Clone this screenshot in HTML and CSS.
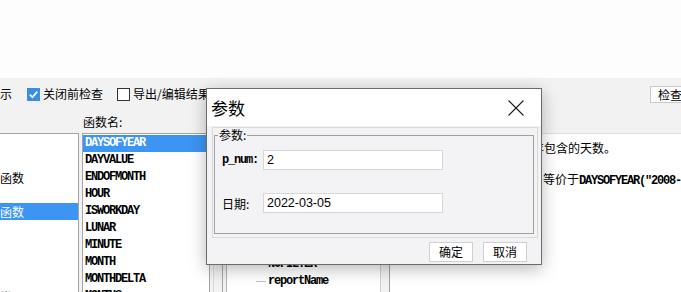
FILE: index.html
```html
<!DOCTYPE html>
<html lang="zh-CN">
<head>
    <meta charset="UTF-8">
    <title>参数</title>
    <link rel="stylesheet" href="styles.css">
</head>
<body>
    <div class="topspace"></div>

    <div class="app">
        <div class="toolbar">
            <label class="chk"><span class="box"></span>显示</label>
            <label class="chk"><svg class="box on" viewBox="0 0 13 13"><path d="M2.8 6.6 L5.4 9.2 L10.3 3.6"/></svg>关闭前检查</label>
            <label class="chk"><span class="box"></span>导出/编辑结果集</label>
            <label class="chk"><svg class="box on" viewBox="0 0 13 13"><path d="M2.8 6.6 L5.4 9.2 L10.3 3.6"/></svg>显示行号</label>
            <label class="chk"><span class="box"></span>自动换行</label>
            <button class="tool-btn">检查</button>
        </div>

        <div class="main">
            <div class="cat-col">
                <div class="cat-box">
                    <div class="row">常用</div>
                    <div class="row">全部</div>
                    <div class="row">数学函数</div>
                    <div class="row">文本</div>
                    <div class="row selected">日期函数</div>
                    <div class="row">逻辑</div>
                    <div class="row">数组</div>
                    <div class="row">报表</div>
                    <div class="row">其它</div>
                    <div class="row">其他类</div>
                </div>
            </div>

            <div class="fn-col">
                <div class="col-label">函数名:</div>
                <div class="fn-box">
                    <div class="row selected">DAYSOFYEAR</div>
                    <div class="row">DAYVALUE</div>
                    <div class="row">ENDOFMONTH</div>
                    <div class="row">HOUR</div>
                    <div class="row">ISWORKDAY</div>
                    <div class="row">LUNAR</div>
                    <div class="row">MINUTE</div>
                    <div class="row">MONTH</div>
                    <div class="row">MONTHDELTA</div>
                    <div class="row">MONTHS</div>
                </div>
            </div>

            <div class="mid-col">
                <div class="tree-box">
                    <div class="tree">
                        <div class="row">参数</div>
                        <div class="row">p_num</div>
                        <div class="row">单元格</div>
                        <div class="row">A1</div>
                        <div class="row">B1</div>
                        <div class="row">数据集</div>
                        <div class="row">ds1</div>
                        <div class="row">NOFILTER</div>
                        <div class="row">reportName</div>
                        <div class="row">formletNo</div>
                    </div>
                </div>
            </div>

            <div class="desc-col">
                <p class="desc-line first">返回日期所在的那一年包含的天数。</p>
                <p class="desc-line">如：<span class="mono">DAYSOFYEAR(2008) </span>等价于<span class="mono">DAYSOFYEAR("2008-01-01")</span></p>
            </div>
        </div>
    </div>

    <div class="dialog">
        <div class="dlg-title">
            <span>参数</span>
            <svg class="close" viewBox="0 0 16 16"><path d="M0.5 0.5 L15.5 15.5 M15.5 0.5 L0.5 15.5"/></svg>
        </div>
        <div class="dlg-body">
            <div class="frame">
                <fieldset class="group">
                    <legend>参数:</legend>
                    <div class="field first">
                        <span class="field-label mono">p_num:</span>
                        <div class="input">2</div>
                    </div>
                    <div class="field">
                        <span class="field-label">日期:</span>
                        <div class="input">2022-03-05</div>
                    </div>
                </fieldset>
            </div>
            <div class="dlg-buttons">
                <button class="btn">确定</button>
                <button class="btn">取消</button>
            </div>
        </div>
    </div>
</body>
</html>
```

FILE: styles.css
```css
* {
    box-sizing: border-box;
}

body {
    margin: 0;
    width: 681px;
    height: 292px;
    overflow: hidden;
    position: relative;
    background: #fdfdfd;
    font-family: "Noto Sans CJK SC", sans-serif;
    font-size: 12px;
    color: #000;
}

.mono {
    font-family: "Liberation Mono", monospace;
    font-weight: bold;
    letter-spacing: -1.2px;
}

.topspace {
    height: 78px;
}

.app {
    margin-left: -40px;
    width: 740px;
    height: 214px;
    overflow: hidden;
    background: #f2f2f3;
}

/* toolbar */
.toolbar {
    height: 32px;
    display: flex;
    align-items: center;
    padding: 0 10px 0 12px;
}

.chk {
    display: flex;
    align-items: center;
    flex: none;
    white-space: nowrap;
    line-height: 16px;
}

.chk + .chk {
    margin-left: 14px;
}

.chk:nth-child(2) {
    margin-left: 15px;
}

.box {
    width: 13px;
    height: 13px;
    margin-right: 3px;
    border: 1px solid #333;
    background: #fff;
    flex: none;
}

svg.box.on {
    border: none;
    background: #3b8ee6;
}

svg.box.on path {
    fill: none;
    stroke: #fff;
    stroke-width: 1.7;
}

.tool-btn {
    margin-left: auto;
    flex: none;
    width: 40px;
    height: 17px;
    padding: 0;
    border: 1px solid #c9c9c9;
    background: #fdfdfd;
    font-family: inherit;
    font-size: 12px;
    line-height: 15px;
}

/* main columns */
.main {
    display: flex;
    height: 182px;
    overflow: hidden;
}

.row {
    height: 17px;
    line-height: 17px;
    white-space: nowrap;
}

.row.selected {
    background: #3c95f2;
    color: #fff;
}

.cat-col {
    flex: none;
    width: 119px;
    padding-top: 23px;
}

.cat-box {
    height: 100%;
    overflow: hidden;
    background: #fff;
    border-top: 1px solid #a5a5a5;
    border-right: 1px solid #a5a5a5;
    padding-top: 1px;
}

.cat-box .row {
    padding-left: 16px;
}

.fn-col {
    flex: none;
    width: 128px;
    margin-left: 3px;
}

.col-label {
    height: 23px;
    line-height: 23px;
    padding-left: 1px;
}

.fn-box {
    height: 159px;
    overflow: hidden;
    background: #fff;
    border: 1px solid #a5a5a5;
    border-bottom: none;
    padding-top: 1px;
}

.fn-box .row,
.tree .row {
    padding-left: 2px;
    font-family: "Liberation Mono", monospace;
    font-weight: bold;
    letter-spacing: -1.2px;
}

.mid-col {
    flex: none;
    width: 177px;
    margin-left: 3px;
    padding: 23px 8px 0 8px;
    border-left: 1px solid #dadada;
    border-right: 1px solid #a0a0a0;
    display: flex;
}

.tree-box {
    flex: 1;
    overflow: hidden;
    border-left: 1px solid #a8a8a8;
    border-right: 1px solid #d0d0d0;
    border-top: 1px solid #a8a8a8;
    padding-left: 3px;
    display: flex;
}

.tree {
    flex: 1;
    background: #fff;
    border-left: 1px solid #b4b4b4;
    padding-top: 3px;
}

.tree .row {
    position: relative;
    padding-left: 41px;
}

.tree .row::before {
    content: "";
    position: absolute;
    left: 29px;
    top: 8px;
    width: 10px;
    border-top: 1px solid #c4c4c4;
}

.desc-col {
    flex: 1;
    min-width: 0;
    overflow: hidden;
    margin-top: 23px;
    background: #fff;
    border-top: 1px solid #dcdcdc;
    padding: 5px 0 0 27px;
    white-space: nowrap;
}

.desc-line {
    margin: 0;
    line-height: 17px;
}

.desc-line.first {
    margin-bottom: 14px;
    text-indent: 7px;
}

/* dialog */
.dialog {
    position: absolute;
    left: 206px;
    top: 88px;
    width: 336px;
    height: 177px;
    border: 1px solid #6c6c6c;
    background: #f3f3f5;
    box-shadow: 0 4px 16px rgba(0, 0, 0, 0.28);
    display: flex;
    flex-direction: column;
}

.dlg-title {
    height: 37px;
    flex: none;
    background: #fff;
    display: flex;
    align-items: center;
    justify-content: space-between;
    padding: 0 17px 0 4px;
    font-size: 17px;
}

.close {
    width: 16px;
    height: 16px;
}

.close path {
    stroke: #1c1c1c;
    stroke-width: 1.1;
    fill: none;
}

.dlg-body {
    flex: 1;
    padding: 1px 3px 0 5px;
}

.frame {
    border: 1px solid #dadada;
}

.group {
    margin: 0 3px 3px 1px;
    padding: 0 7px 20px 7px;
    border: 1px solid #a0a0a0;
}

.group legend {
    margin-left: -4px;
    padding: 0 1px;
    line-height: 14px;
    font-size: 12px;
}

.field {
    display: flex;
    align-items: center;
    margin-top: 23px;
}

.field.first {
    margin-top: 8px;
}

.field-label {
    width: 41px;
}

.input {
    width: 180px;
    height: 20px;
    padding-left: 3px;
    border: 1px solid #d7d7d7;
    background: #fff;
    font-family: "Liberation Sans", sans-serif;
    font-size: 12.5px;
    line-height: 18px;
}

.dlg-buttons {
    display: flex;
    justify-content: flex-end;
    gap: 10px;
    margin-top: 4px;
    padding-right: 11px;
}

.btn {
    width: 44px;
    height: 20px;
    padding: 0;
    border: 1px solid #d0d0d0;
    background: #fff;
    font-family: inherit;
    font-size: 12px;
    line-height: 18px;
}
```
